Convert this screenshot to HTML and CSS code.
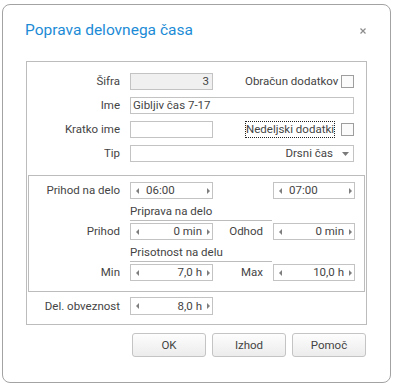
FILE: index.html
```html
<!DOCTYPE html>
<html lang="sl">
<head>
<meta charset="utf-8">
<title>Poprava delovnega časa</title>
<link rel="stylesheet" href="styles.css">
</head>
<body>
<div class="dialog">
  <div class="titlebar">
    <h1 class="title">Poprava delovnega časa</h1>
    <span class="close"><svg width="6" height="6" viewBox="0 0 6 6"><path d="M0.5 0.5L5.5 5.5M5.5 0.5L0.5 5.5" stroke="#8c8c8c" stroke-width="1.2"/></svg></span>
  </div>
  <div class="panel">
    <div class="top-grid">
      <span class="lbl">Šifra</span>
      <div class="input disabled num">3</div>
      <span class="side-lbl">Obračun dodatkov</span>
      <span class="check"></span>

      <span class="lbl">Ime</span>
      <div class="input span3">Gibljiv čas 7-17</div>

      <span class="lbl">Kratko ime</span>
      <div class="input"></div>
      <span class="side-lbl"><span class="focus">Nedeljski dodatki</span></span>
      <span class="check"></span>

      <span class="lbl">Tip</span>
      <div class="input span3 combo"><span class="combo-val">Drsni čas</span><svg class="drop" width="7" height="4" viewBox="0 0 7 4"><path d="M0 0H7L3.5 4Z" fill="#7a7a7a"/></svg></div>
    </div>

    <div class="times">
      <span class="lbl first">Prihod na delo</span>
      <div class="spin"><i class="arr l"></i><span class="val left">06:00</span><i class="arr r"></i></div>
      <span></span>
      <div class="spin"><i class="arr l"></i><span class="val left">07:00</span><i class="arr r"></i></div>

      <span class="section">Priprava na delo</span>

      <span class="lbl first">Prihod</span>
      <div class="spin"><i class="arr l"></i><span class="val">0 min</span><i class="arr r"></i></div>
      <span class="lbl">Odhod</span>
      <div class="spin"><i class="arr l"></i><span class="val">0 min</span><i class="arr r"></i></div>

      <span class="section">Prisotnost na delu</span>

      <span class="lbl first">Min</span>
      <div class="spin"><i class="arr l"></i><span class="val">7,0 h</span><i class="arr r"></i></div>
      <span class="lbl">Max</span>
      <div class="spin"><i class="arr l"></i><span class="val">10,0 h</span><i class="arr r"></i></div>
    </div>

    <div class="oblig">
      <span class="lbl">Del. obveznost</span>
      <div class="spin"><i class="arr l"></i><span class="val">8,0 h</span><i class="arr r"></i></div>
    </div>
  </div>
  <div class="buttons">
    <button class="btn">OK</button>
    <button class="btn">Izhod</button>
    <button class="btn">Pomoč</button>
  </div>
</div>
</body>
</html>
```
FILE: styles.css
```css
* { box-sizing: border-box; }
html, body { margin: 0; padding: 0; background: #fff; }
body {
  font-family: Roboto, "Liberation Sans", sans-serif;
  font-size: 11.5px;
  color: #444;
}
.dialog {
  margin: 4px 0 0 2px;
  width: 389px;
  height: 379px;
  border: 1px solid #a3a3a3;
  border-radius: 8px;
  background: #fff;
}
.titlebar {
  height: 56px;
  display: flex;
  align-items: flex-start;
  padding: 16px 24px 0 22px;
}
.title {
  margin: 0;
  font-weight: normal;
  font-size: 15.5px;
  line-height: 19px;
  color: #1c8bd6;
}
.close {
  margin-left: auto;
  margin-top: 7px;
  display: flex;
}
.panel {
  margin-left: 23px;
  width: 341px;
  border: 1px solid #bcbcbc;
  padding: 11px 0 9px 0;
}
.lbl {
  text-align: right;
  white-space: nowrap;
  line-height: 17px;
}
.top-grid {
  display: grid;
  grid-template-columns: 93px 83px 108px 13px;
  column-gap: 10px;
  row-gap: 7px;
  grid-auto-rows: 17px;
  align-items: center;
}
.input {
  height: 17px;
  border: 1px solid #c3c3c3;
  background: #fff;
  padding: 0 2px;
  line-height: 15px;
  white-space: nowrap;
}
.input.disabled { background: #f0f0f0; }
.input.num { text-align: right; padding-right: 3px; }
.span3 { grid-column: 2 / 5; }
.side-lbl {
  padding-left: 22px;
  line-height: 17px;
  white-space: nowrap;
}
.focus {
  border: 1px dotted #222;
  padding: 0 0 1px 0;
}
.check {
  width: 13px;
  height: 13px;
  border: 1px solid #9e9e9e;
  background: #fbfbfb;
}
.combo {
  display: flex;
  align-items: center;
  justify-content: flex-end;
  padding-right: 4px;
}
.combo-val { margin-right: 9px; }
.times {
  margin: 13px 1px 0 1px;
  border: 1px solid #bcbcbc;
  padding: 6px 0 10px 0;
  display: grid;
  grid-template-columns: 91px 83px 40px 82px;
  column-gap: 10px;
  grid-template-rows: 17px 24px 17px 24px 17px;
  align-items: stretch;
}
.times .first { grid-column: 1; }
.section {
  grid-column: 2 / 4;
  margin-right: -9px;
  height: 22px;
  border-bottom: 1px solid #bcbcbc;
  display: flex;
  align-items: flex-end;
  padding-bottom: 1px;
  line-height: 15px;
  white-space: nowrap;
}
.spin {
  height: 17px;
  border: 1px solid #c3c3c3;
  background: #fff;
  display: flex;
  align-items: center;
  padding: 0 2px 0 5px;
}
.val {
  flex: 1;
  text-align: right;
  padding-right: 5px;
  line-height: 15px;
  white-space: nowrap;
}
.val.left { text-align: left; padding-left: 7px; }
.arr {
  width: 0;
  height: 0;
  border-top: 3px solid transparent;
  border-bottom: 3px solid transparent;
  flex: none;
}
.arr.l { border-right: 3px solid #7e7e7e; }
.arr.r { border-left: 3px solid #7e7e7e; }
.oblig {
  display: flex;
  align-items: center;
  gap: 10px;
  margin-top: 5px;
}
.oblig .lbl { width: 93px; }
.oblig .spin { width: 83px; height: 18px; }
.buttons {
  display: flex;
  justify-content: flex-end;
  gap: 6px;
  margin-top: 8px;
  padding-right: 24px;
}
.btn {
  width: 74px;
  height: 24px;
  border: 1px solid #c4c4c4;
  border-radius: 3px;
  background: linear-gradient(#fdfdfd, #ececec);
  font-family: Roboto, "Liberation Sans", sans-serif;
  font-size: 11.5px;
  color: #444;
  padding: 0;
}
```
